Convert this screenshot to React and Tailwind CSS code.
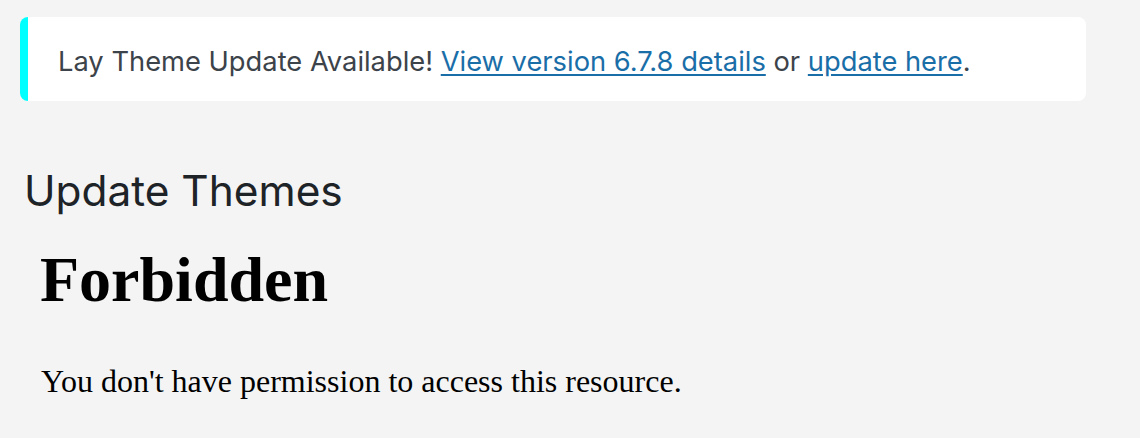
export default function App() {
  return (
    <div className="min-h-screen bg-[#f4f4f4] pt-[17px] pl-[20px] pr-[54px]">
      <div
        className="h-[84px] flex items-center bg-white rounded-lg border-l-[8px] border-[#00ffff] pl-[30px] pt-[4px] text-[27.3px] leading-[27px] text-[#3c434a]"
        style={{ fontFamily: 'Inter, sans-serif' }}
      >
        <p>
          Lay Theme Update Available!{' '}
          <a href="#" className="text-[#1a6ea8] underline underline-offset-[3px]">
            View version 6.7.8 details
          </a>{' '}
          or{' '}
          <a href="#" className="text-[#1a6ea8] underline underline-offset-[3px]">
            update here
          </a>
          .
        </p>
      </div>

      <h1
        className="mt-[69px] pl-[4px] text-[42.4px] leading-[42px] font-normal text-[#1d2327]"
        style={{ fontFamily: 'Inter, sans-serif' }}
      >
        Update Themes
      </h1>

      <div className="pl-[20px]" style={{ fontFamily: '"Liberation Serif", serif' }}>
        <h1 className="mt-[36px] text-[64px] leading-[64px] font-bold text-black">Forbidden</h1>
        <p className="mt-[53px] pl-[1px] text-[32px] leading-[32px] text-black">
          You don't have permission to access this resource.
        </p>
      </div>
    </div>
  );
}
